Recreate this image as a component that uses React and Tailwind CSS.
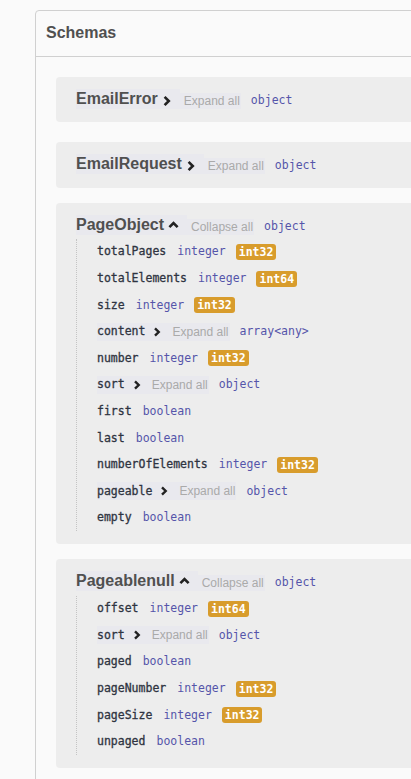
import React from "react";

const mono = "font-['DejaVu_Sans_Mono',monospace] text-[11.5px]";
const sans = "font-['Liberation_Sans',Arial,sans-serif]";

function ChevronRight({ big }) {
  if (big) {
    return (
      <svg width="10" height="12" viewBox="0 0 10 12" className="ml-1 mt-[3px] shrink-0">
        <path d="M2.6 1.8 L6.8 6 L2.6 10.2" fill="none" stroke="#222" strokeWidth="2.6" />
      </svg>
    );
  }
  return (
    <svg width="8" height="10" viewBox="0 0 8 10" className="ml-2 shrink-0">
      <path d="M2 1.4 L5.7 5 L2 8.6" fill="none" stroke="#222" strokeWidth="2.4" />
    </svg>
  );
}

function ChevronUp() {
  return (
    <svg width="11" height="10" viewBox="0 0 11 10" className="ml-1 shrink-0">
      <path d="M1.4 7.2 L5.5 3 L9.6 7.2" fill="none" stroke="#222" strokeWidth="2.6" />
    </svg>
  );
}

function Badge({ children }) {
  return (
    <span
      className={`ml-[10px] h-4 rounded-[3px] bg-[#d89c2c] px-[3px] font-bold leading-4 text-white ${mono}`}
    >
      {children}
    </span>
  );
}

function Type({ children, className = "ml-[11px]" }) {
  return <span className={`${className} ${mono} text-[#5555aa]`}>{children}</span>;
}

function Name({ children }) {
  return <span className={`${mono} text-[#2f3441] [-webkit-text-stroke:0.3px_#2f3441]`}>{children}</span>;
}

function Row({ name, type, format, expandable }) {
  return (
    <div className="flex h-[26.6px] items-center">
      {expandable ? (
        <>
          <span className="flex h-[18px] items-center bg-[#e9e9ee] pr-[7px]">
            <Name>{name}</Name>
            <ChevronRight />
          </span>
          <span className={`flex h-[18px] items-center bg-[#e9e9ee] pl-1 pr-px text-xs text-[#aaaaaa] ${sans}`}>
            Expand all
          </span>
          <Type className="ml-[10px]">{type}</Type>
        </>
      ) : (
        <>
          <Name>{name}</Name>
          <Type>{type}</Type>
          {format ? <Badge>{format}</Badge> : null}
        </>
      )}
    </div>
  );
}

function ModelTitle({ title, open }) {
  return (
    <div className="flex items-center">
      <span className="flex h-5 items-center bg-[#e9e9ee] pr-2">
        <span className={`text-base font-bold leading-5 text-[#505050] ${sans}`}>{title}</span>
        {open ? <ChevronUp /> : <ChevronRight big />}
      </span>
      <span className={`mt-1 flex h-4 items-center bg-[#e9e9ee] pl-1 pr-px text-xs text-[#aaaaaa] ${sans}`}>
        {open ? "Collapse all" : "Expand all"}
      </span>
      <Type className="ml-[10px] mt-[3px]">object</Type>
    </div>
  );
}

function Model({ title, rows, className = "" }) {
  const open = Boolean(rows);
  return (
    <div className={`mx-5 rounded bg-[#ededed] px-5 pb-[13px] pt-3 ${className}`}>
      <ModelTitle title={title} open={open} />
      {open ? (
        <div className="mt-1 border-l border-dotted border-[#c4c4c4] pl-5">
          {rows.map((r) => (
            <Row key={r.name} {...r} />
          ))}
        </div>
      ) : null}
    </div>
  );
}

const pageObject = [
  { name: "totalPages", type: "integer", format: "int32" },
  { name: "totalElements", type: "integer", format: "int64" },
  { name: "size", type: "integer", format: "int32" },
  { name: "content", type: "array<any>", expandable: true },
  { name: "number", type: "integer", format: "int32" },
  { name: "sort", type: "object", expandable: true },
  { name: "first", type: "boolean" },
  { name: "last", type: "boolean" },
  { name: "numberOfElements", type: "integer", format: "int32" },
  { name: "pageable", type: "object", expandable: true },
  { name: "empty", type: "boolean" },
];

const pageable = [
  { name: "offset", type: "integer", format: "int64" },
  { name: "sort", type: "object", expandable: true },
  { name: "paged", type: "boolean" },
  { name: "pageNumber", type: "integer", format: "int32" },
  { name: "pageSize", type: "integer", format: "int32" },
  { name: "unpaged", type: "boolean" },
];

export default function App() {
  return (
    <div className="h-[779px] w-[411px] overflow-hidden bg-[#fafafa]">
      <section className="ml-[35px] mt-[10px] min-h-[900px] w-[700px] rounded-tl border border-[#d0d0d0]">
        <div className="border-b border-[#d0d0d0] pb-[11px] pl-[10px] pt-[9px]">
          <h4 className={`text-base font-bold leading-[25px] text-[#505050] ${sans}`}>Schemas</h4>
        </div>
        <div className="pt-5">
          <Model title="EmailError" />
          <Model title="EmailRequest" className="mt-5" />
          <Model title="PageObject" rows={pageObject} className="mt-[15px]" />
          <Model title="Pageablenull" rows={pageable} className="mt-[15px]" />
        </div>
      </section>
    </div>
  );
}
